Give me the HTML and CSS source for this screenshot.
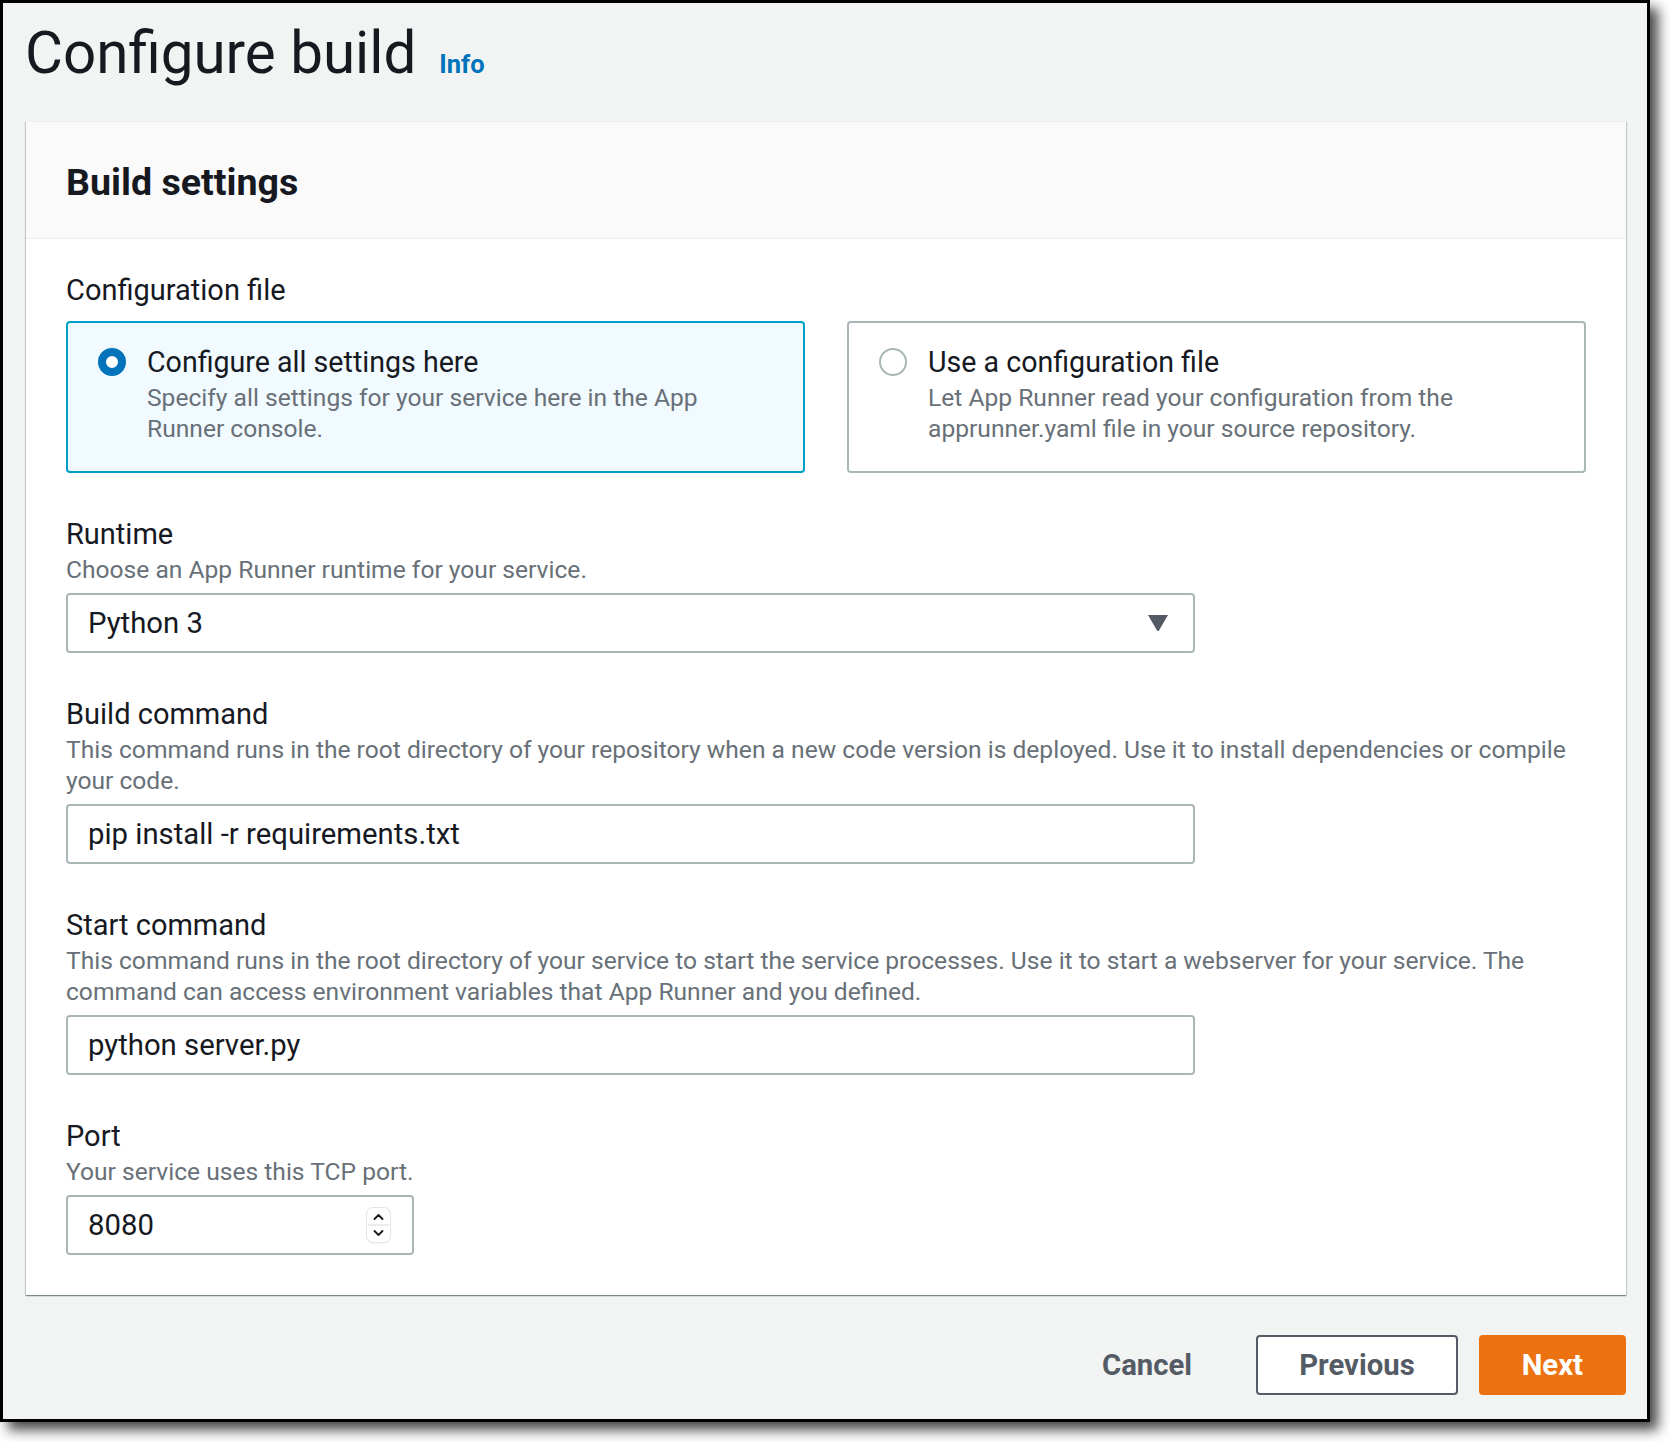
FILE: index.html
```html
<!DOCTYPE html>
<html lang="en">
<head>
<meta charset="utf-8">
<title>Configure build</title>
<link rel="stylesheet" href="styles.css">
</head>
<body>
<div class="frame">
  <header class="page-head">
    <h1 class="page-title">Configure build</h1>
    <a class="info-link" href="#">Info</a>
  </header>

  <section class="card">
    <div class="card-head">
      <h2 class="card-title">Build settings</h2>
    </div>
    <div class="card-body">
      <div class="field">
        <div class="label">Configuration file</div>
        <div class="tiles">
          <div class="tile tile-selected">
            <span class="radio radio-on"></span>
            <div class="tile-text">
              <div class="tile-title">Configure all settings here</div>
              <div class="tile-desc">Specify all settings for your service here in the App Runner console.</div>
            </div>
          </div>
          <div class="tile">
            <span class="radio"></span>
            <div class="tile-text">
              <div class="tile-title">Use a configuration file</div>
              <div class="tile-desc">Let App Runner read your configuration from the apprunner.yaml file in your source repository.</div>
            </div>
          </div>
        </div>
      </div>

      <div class="field">
        <div class="label">Runtime</div>
        <div class="desc">Choose an App Runner runtime for your service.</div>
        <div class="control select">
          <span class="control-text">Python 3</span>
          <svg class="caret" width="20" height="16" viewBox="0 0 20 16"><path d="M0 0 H20 L11 15.5 Q10 16.5 9 15.5 Z" fill="#545b64"/></svg>
        </div>
      </div>

      <div class="field">
        <div class="label">Build command</div>
        <div class="desc">This command runs in the root directory of your repository when a new code version is deployed. Use it to install dependencies or compile your code.</div>
        <div class="control wide">
          <span class="control-text">pip install -r requirements.txt</span>
        </div>
      </div>

      <div class="field">
        <div class="label">Start command</div>
        <div class="desc">This command runs in the root directory of your service to start the service processes. Use it to start a webserver for your service. The command can access environment variables that App Runner and you defined.</div>
        <div class="control wide">
          <span class="control-text">python server.py</span>
        </div>
      </div>

      <div class="field">
        <div class="label">Port</div>
        <div class="desc">Your service uses this TCP port.</div>
        <div class="control number">
          <span class="control-text">8080</span>
          <span class="spinner">
            <svg width="23" height="34" viewBox="0 0 23 34">
              <line x1="1" y1="17" x2="22" y2="17" stroke="#d5dbdb" stroke-width="1"/>
              <path d="M7.5 11 L11.5 7 L15.5 11" fill="none" stroke="#16191f" stroke-width="1.8" stroke-linecap="round" stroke-linejoin="round"/>
              <path d="M7.5 23 L11.5 27 L15.5 23" fill="none" stroke="#16191f" stroke-width="1.8" stroke-linecap="round" stroke-linejoin="round"/>
            </svg>
          </span>
        </div>
      </div>
    </div>
  </section>

  <footer class="actions">
    <button class="btn btn-link" type="button">Cancel</button>
    <button class="btn btn-normal" type="button">Previous</button>
    <button class="btn btn-primary" type="button">Next</button>
  </footer>
</div>
</body>
</html>
```

FILE: styles.css
```css
* { box-sizing: border-box; }

html, body {
  margin: 0;
  padding: 0;
  background: #ffffff;
}

body {
  width: 1670px;
  height: 1442px;
  font-family: Roboto, "Liberation Sans", Arial, sans-serif;
  color: #16191f;
  overflow: hidden;
}

.frame {
  width: 1650px;
  height: 1422px;
  border: 3px solid #000000;
  background: #f2f3f3;
  box-shadow: 8px 8px 12px rgba(0, 0, 0, 0.72);
  display: flex;
  flex-direction: column;
}

.page-head {
  display: flex;
  align-items: baseline;
  padding: 17px 0 0 22px;
  height: 118px;
}

.page-title {
  margin: 0;
  font-size: 58.3px;
  line-height: 66px;
  font-weight: 400;
  color: #16191f;
}

.info-link {
  margin-left: 23px;
  font-size: 25.5px;
  font-weight: 700;
  color: #0073bb;
  text-decoration: none;
}

.card {
  margin-left: 23px;
  width: 1600px;
  background: #ffffff;
  border-top: 1px solid #eaeded;
  box-shadow: 0 1px 1px 0 rgba(0, 28, 36, 0.3),
              1px 1px 1px 0 rgba(0, 28, 36, 0.15),
              -1px 1px 1px 0 rgba(0, 28, 36, 0.15);
}

.card-head {
  background: #fafafa;
  border-bottom: 1px solid #eaeded;
  padding: 38px 40px 34px 40px;
}

.card-title {
  margin: 0;
  font-size: 37.6px;
  line-height: 44px;
  font-weight: 700;
  color: #16191f;
}

.card-body {
  padding: 33px 40px 40px 40px;
  display: flex;
  flex-direction: column;
  gap: 43px;
}

.field {
  display: flex;
  flex-direction: column;
}

.label {
  font-size: 29px;
  line-height: 36px;
  color: #16191f;
}

.desc {
  margin-top: 2px;
  font-size: 24.6px;
  line-height: 31px;
  color: #687078;
}

.tiles {
  margin-top: 13px;
  display: grid;
  grid-template-columns: 1fr 1fr;
  gap: 42px;
}

.tile {
  height: 152px;
  border: 2px solid #aab7b8;
  border-radius: 4px;
  background: #ffffff;
  padding: 21px 30px 0 30px;
  display: flex;
  align-items: flex-start;
  gap: 21px;
}

.tile-selected {
  border-color: #00a1c9;
  background: #f1faff;
}

.radio {
  flex: none;
  width: 28px;
  height: 28px;
  margin-top: 4px;
  border-radius: 50%;
  border: 2px solid #aab7b8;
  background: #ffffff;
}

.radio-on {
  border: 8px solid #0073bb;
  background: #ffffff;
}

.tile-title {
  font-size: 28.6px;
  line-height: 36px;
  color: #16191f;
}

.tile-desc {
  margin-top: 2px;
  font-size: 24.6px;
  line-height: 31px;
  color: #687078;
}

.control {
  margin-top: 8px;
  height: 60px;
  border: 2px solid #aab7b8;
  border-radius: 4px;
  background: #ffffff;
  display: flex;
  align-items: center;
  justify-content: space-between;
  padding: 0 25px 0 20px;
}

.select, .wide {
  width: 1129px;
}

.number {
  width: 348px;
  padding-right: 22px;
}

.control-text {
  font-size: 29.3px;
  color: #16191f;
}

.caret {
  display: block;
}

.spinner {
  display: block;
  width: 23px;
  height: 34px;
  border-radius: 6px;
  background: #ffffff;
  box-shadow: 0 0 0 1px #e3e6e6, 0 1px 2px rgba(0, 0, 0, 0.12);
}

.spinner svg {
  display: block;
}

.actions {
  margin-top: 40px;
  width: 1623px;
  display: flex;
  justify-content: flex-end;
  gap: 21px;
}

.btn {
  height: 60px;
  padding: 0 41px;
  border: 2px solid transparent;
  border-radius: 4px;
  font-family: Roboto, "Liberation Sans", Arial, sans-serif;
  font-size: 29.3px;
  font-weight: 700;
  background: transparent;
  color: #545b64;
  cursor: pointer;
}

.btn-normal {
  background: #ffffff;
  border-color: #545b64;
}

.btn-primary {
  background: #ec7211;
  border-color: #ec7211;
  color: #ffffff;
}
```
